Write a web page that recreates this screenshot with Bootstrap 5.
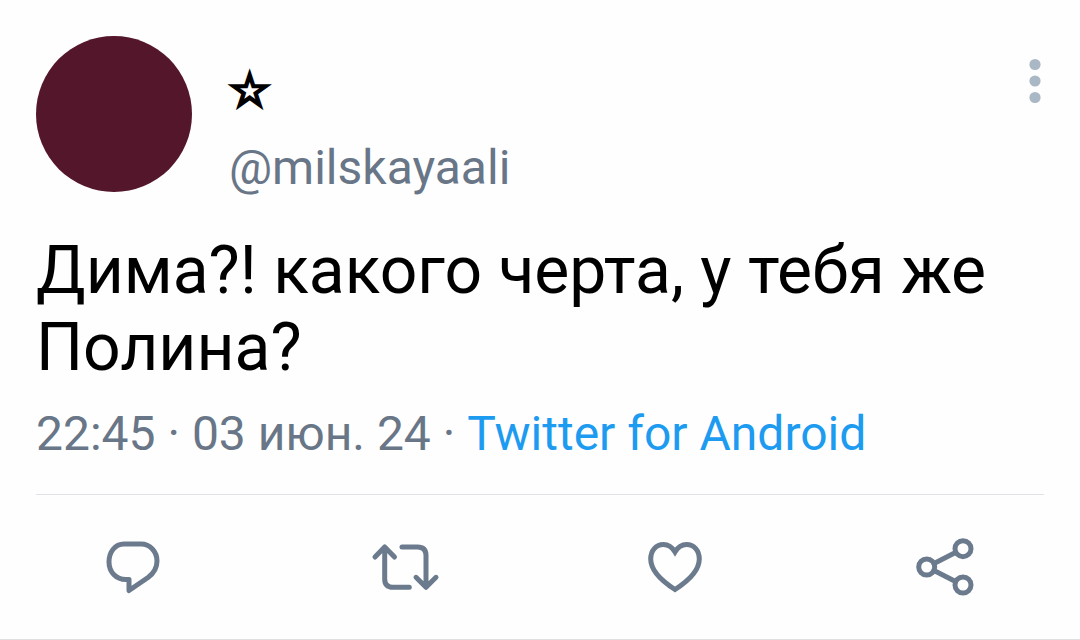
<!DOCTYPE html>
<html lang="ru">
<head>
<meta charset="utf-8">
<meta name="viewport" content="width=device-width, initial-scale=1">
<title>Tweet</title>
<link href="https://cdn.jsdelivr.net/npm/bootstrap@5.3.0/dist/css/bootstrap.min.css" rel="stylesheet">
<style>
body{font-family:Roboto,"Noto Sans",sans-serif;background:#fefefe;color:#000}
.tweet{border-bottom:1px solid #dfe0e2}
.tweet-body{padding:36px 36px 0}
.avatar{width:156px;height:156px;background:#54162b;flex:none}
.who{margin-left:37px;padding-top:24px}
.display-name{font-family:"DejaVu Sans",sans-serif;font-size:46px;line-height:60px;height:84px;-webkit-text-stroke:3px #000}
.handle,.meta{font-size:48px;line-height:60px;color:#687687}
.handle{line-height:48px}
.tweet-text{font-size:66px;line-height:77px;margin-top:40px}
.meta{margin-top:18px;padding-bottom:30px;border-bottom:1px solid #e3e1e7}
.source{color:#1d9bf0}
.icon-btn{color:#6b7b8d;line-height:0}
.more{margin:20px -1px 0 0;color:#aab8c6}
.actions{padding:36px 0}
.line-icon{fill:none;stroke:currentColor;stroke-width:5;stroke-linecap:round;stroke-linejoin:round}
</style>
</head>
<body>
<article class="tweet">
<div class="tweet-body">
<header class="d-flex align-items-start">
<div class="avatar rounded-circle"></div>
<div class="who">
<div class="display-name">☆</div>
<a href="#" class="handle d-block text-decoration-none">@milskayaali</a>
</div>
<button type="button" class="btn border-0 p-0 icon-btn more ms-auto" aria-label="Ещё"><svg width="20" height="50" viewBox="0 0 20 50" fill="currentColor"><circle cx="10" cy="8.500" r="5.600"/><circle cx="10" cy="25" r="5.600"/><circle cx="10" cy="41.500" r="5.600"/></svg></button>
</header>
<p class="tweet-text mb-0">Дима?! какого черта, у тебя же Полина?</p>
<div class="meta">22:45 · 03 июн. 24 · <a href="#" class="source text-decoration-none">Twitter for Android</a></div>
</div>
<div class="row g-0 text-center actions">
<div class="col"><button type="button" class="btn border-0 p-0 icon-btn" aria-label="Ответить"><svg class="line-icon" width="72" height="72" viewBox="0 0 72 72"><path d="M25 13H42C51 13 58 20.500 58 30C58 37 54.500 42.500 49 46.500L30 59.500V48.500H27C17 48.500 10 41 10 31C10 21 16 13 25 13Z"/></svg></button></div>
<div class="col"><button type="button" class="btn border-0 p-0 icon-btn" aria-label="Ретвитнуть"><svg class="line-icon" width="72" height="72" viewBox="0 0 72 72"><path d="M6 26L15.700 16L25.500 26M15.700 16V48Q15.700 56.300 24 56.300H40.300M33 16H48.500Q57 16 57 24.500V56M47 46.300L57 56.300L67 46.300"/></svg></button></div>
<div class="col"><button type="button" class="btn border-0 p-0 icon-btn" aria-label="Нравится"><svg class="line-icon" width="72" height="72" viewBox="0 0 72 72"><path stroke-linejoin="miter" d="M36 21C33 16 29 13.500 24.500 13.500C17 13.500 11.700 19.500 11.700 28C11.700 39 22 49.500 36 58.500C50 49.500 60.300 39 60.300 28C60.300 19.500 55 13.500 47.500 13.500C43 13.500 39 16 36 21Z"/></svg></button></div>
<div class="col"><button type="button" class="btn border-0 p-0 icon-btn" aria-label="Поделиться"><svg class="line-icon" width="72" height="72" viewBox="0 0 72 72"><circle cx="17.700" cy="36" r="8"/><circle cx="54" cy="17.700" r="8"/><circle cx="54" cy="54" r="8"/><path d="M25 32.500L46.500 21.500M25 39.500L46.500 50.500"/></svg></button></div>
</div>
</article>
<script src="https://cdn.jsdelivr.net/npm/bootstrap@5.3.0/dist/js/bootstrap.bundle.min.js"></script>
</body>
</html>
